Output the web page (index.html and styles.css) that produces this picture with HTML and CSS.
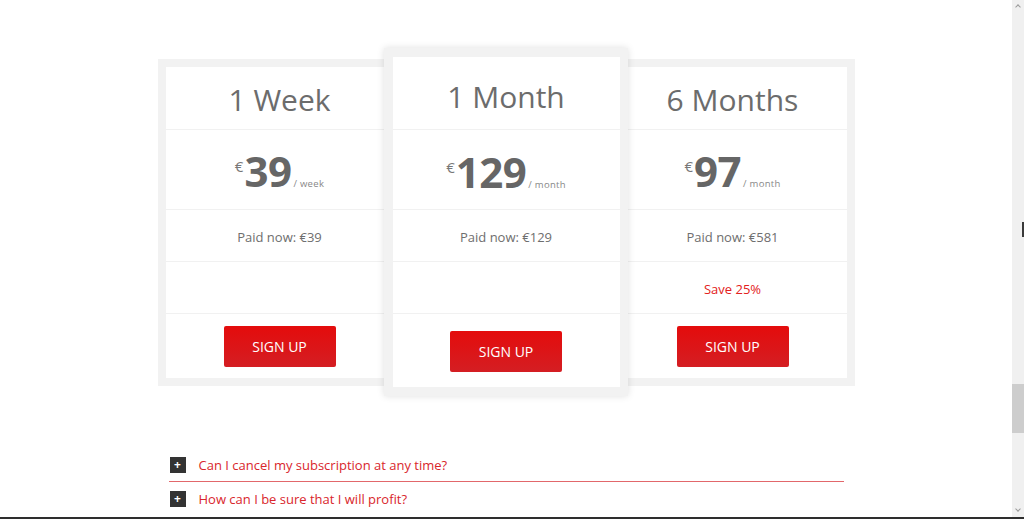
FILE: index.html
```html
<!DOCTYPE html>
<html lang="en">
<head>
<meta charset="utf-8">
<title>Pricing</title>
<link rel="stylesheet" href="styles.css">
</head>
<body>
<main class="main">
  <section class="pricing">
    <div class="plan">
      <div class="plan-inner">
        <div class="row row-title">1 Week</div>
        <div class="row row-price"><span class="price"><span class="cur">€</span><span class="amount">39</span><span class="per">/ week</span></span></div>
        <div class="row row-text">Paid now: €39</div>
        <div class="row row-text"></div>
        <div class="row row-btn"><a class="btn" href="#">SIGN UP</a></div>
      </div>
    </div>
    <div class="plan plan-featured">
      <div class="plan-inner">
        <div class="row row-title">1 Month</div>
        <div class="row row-price"><span class="price"><span class="cur">€</span><span class="amount">129</span><span class="per">/ month</span></span></div>
        <div class="row row-text">Paid now: €129</div>
        <div class="row row-text"></div>
        <div class="row row-btn"><a class="btn" href="#">SIGN UP</a></div>
      </div>
    </div>
    <div class="plan">
      <div class="plan-inner">
        <div class="row row-title">6 Months</div>
        <div class="row row-price"><span class="price"><span class="cur">€</span><span class="amount">97</span><span class="per">/ month</span></span></div>
        <div class="row row-text">Paid now: €581</div>
        <div class="row row-text save">Save 25%</div>
        <div class="row row-btn"><a class="btn" href="#">SIGN UP</a></div>
      </div>
    </div>
  </section>

  <section class="faq">
    <div class="faq-item"><span class="faq-toggle">+</span><span class="faq-q">Can I cancel my subscription at any time?</span></div>
    <div class="faq-item"><span class="faq-toggle">+</span><span class="faq-q">How can I be sure that I will profit?</span></div>
  </section>
</main>

<div class="scrollbar">
  <span class="sb-arrow sb-up"></span>
  <span class="sb-thumb"></span>
  <span class="sb-arrow sb-down"></span>
</div>
<span class="cursor-mark"></span>
<div class="taskbar-edge"></div>
</body>
</html>
```

FILE: styles.css
```css
* { box-sizing: border-box; }

html, body {
  margin: 0;
  padding: 0;
  height: 519px;
  overflow: hidden;
  background: #ffffff;
  font-family: "Open Sans", "Liberation Sans", sans-serif;
  color: #666666;
}

.main {
  width: 1012px;
  padding-top: 48px;
}

.pricing {
  display: flex;
  align-items: center;
  justify-content: center;
}

.plan {
  width: 244px;
  padding: 8px;
  background: #f2f2f2;
  position: relative;
  z-index: 0;
}

.plan-inner {
  background: #ffffff;
  display: grid;
  grid-template-rows: 63px 80px 52px 52px 64px;
}

.plan-featured {
  padding: 9px 8px 9px 9px;
  margin: 0 -17px 0 -18px;
  z-index: 1;
  box-shadow: 0 0 7px rgba(0, 0, 0, 0.13);
}

.plan-featured .plan-inner {
  grid-template-rows: 73px 80px 52px 52px 73px;
}

.row {
  display: flex;
  align-items: center;
  justify-content: center;
  border-bottom: 1px solid #f1f1f1;
}

.row-btn {
  border-bottom: 0;
  padding-top: 2px;
}

.row-title {
  font-size: 30px;
  font-weight: 400;
  color: #6c6c6c;
  padding-top: 3px;
}

.plan-featured .row-title { padding-top: 6px; }

.price {
  display: inline-block;
  white-space: nowrap;
  padding-top: 3px;
}

.cur {
  font-size: 15px;
  color: #777777;
  vertical-align: 15px;
  margin-right: 1px;
}

.amount {
  font-size: 42px;
  font-weight: 700;
  color: #666666;
  letter-spacing: -0.5px;
}

.per {
  font-size: 9.5px;
  color: #888888;
  margin-left: 2px;
  letter-spacing: 0.3px;
}

.row-text {
  font-size: 13px;
  color: #6e6e6e;
  padding-top: 3px;
}

.save { color: #e32020; }

.btn {
  display: flex;
  align-items: center;
  justify-content: center;
  width: 112px;
  height: 41px;
  border-radius: 2px;
  background: linear-gradient(#e40c0c, #d41e23);
  color: #ffffff;
  font-size: 14px;
  text-decoration: none;
}

.faq {
  width: 675px;
  margin: 52px auto 0;
}

.faq-item {
  display: flex;
  align-items: center;
  gap: 13px;
  height: 34px;
  padding-left: 1px;
  border-bottom: 1px solid #e2676b;
}

.faq-item:last-child { border-bottom: 0; }

.faq-toggle {
  width: 16px;
  height: 16px;
  background: #333333;
  color: #ffffff;
  font-size: 12px;
  font-weight: 700;
  line-height: 16px;
  text-align: center;
}

.faq-q {
  font-size: 13px;
  color: #d9262c;
}

/* window chrome overlays */
.scrollbar {
  position: fixed;
  top: 0;
  right: 0;
  width: 12px;
  height: 519px;
  background: #f0f0f0;
}

.sb-thumb {
  position: absolute;
  left: 0;
  top: 384px;
  width: 12px;
  height: 49px;
  background: #cdcdcd;
}

.sb-arrow {
  position: absolute;
  left: 4px;
  width: 4px;
  height: 4px;
  border-left: 1px solid #9a9a9a;
  border-top: 1px solid #9a9a9a;
}

.sb-up { top: 5px; transform: rotate(45deg); }
.sb-down { top: 507px; transform: rotate(225deg); }

.cursor-mark {
  position: fixed;
  top: 222px;
  left: 1022px;
  width: 2px;
  height: 15px;
  background: #3a3a3a;
}

.taskbar-edge {
  position: fixed;
  left: 0;
  bottom: 0;
  width: 1024px;
  height: 2px;
  background: #2e2e2e;
}
```
